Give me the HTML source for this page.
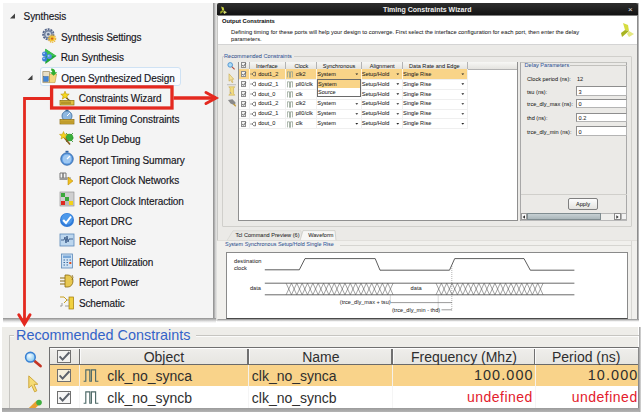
<!DOCTYPE html>
<html><head><meta charset="utf-8"><style>
*{box-sizing:border-box;margin:0;padding:0}
html,body{width:643px;height:412px;overflow:hidden;background:#fff}
body{position:relative;font-family:"Liberation Sans",sans-serif}
.a{position:absolute}
.t{position:absolute;white-space:nowrap;line-height:1}
.ti{font-size:10px;color:#15151c;letter-spacing:-0.1px;-webkit-text-stroke:0.15px #15151c}
.d{font-size:5.6px;color:#1e1e1e;-webkit-text-stroke:0.04px #1e1e1e}
.b{font-size:14px;color:#2e2e2e}
.cb{position:absolute;width:6px;height:6px;border:0.8px solid #8e8e8e;background:#f4f4f4}
.inp{position:absolute;background:#fff;border:1px solid #b4b4b4;border-top-color:#8e8e8e;border-left-color:#8e8e8e}
</style></head><body>
<div class="a" style="left:3px;top:3px;width:211px;height:316px;background:#f4f4f4"></div>
<div class="a" style="left:213px;top:3px;width:4px;height:318px;background:linear-gradient(90deg,#8a8a8a,#b8b8b8 45%,#dcdcdc 70%,#e2e2e0)"></div>
<div class="a" style="left:3px;top:318px;width:213px;height:4.5px;background:linear-gradient(#8e8e8e,#bdbdbd 35%,#e6e6e6 70%,#fff)"></div>
<div class="a" style="left:39.5px;top:66.6px;width:141px;height:19.4px;border:1.4px solid #cfe2f4;border-radius:3px;background:#f9fbfe"></div>
<svg class="a" style="left:0;top:0" width="216" height="320"><path d="M10 18.5 L15 13.5 L15 18.5 Z" fill="#404040"/><path d="M27.5 80 L32.5 75 L32.5 80 Z" fill="#404040"/></svg>
<div class="t ti" style="left:23.6px;top:12.10px">Synthesis</div>
<div class="t ti" style="left:61px;top:32.59px">Synthesis Settings</div>
<div class="t ti" style="left:60.7px;top:53.08px">Run Synthesis</div>
<div class="t ti" style="left:61.3px;top:73.57px">Open Synthesized Design</div>
<div class="t ti" style="left:78.7px;top:94.06px">Constraints Wizard</div>
<div class="t ti" style="left:78.9px;top:114.55px">Edit Timing Constraints</div>
<div class="t ti" style="left:78.9px;top:135.04px">Set Up Debug</div>
<div class="t ti" style="left:78.9px;top:155.53px">Report Timing Summary</div>
<div class="t ti" style="left:78.9px;top:176.02px">Report Clock Networks</div>
<div class="t ti" style="left:78.9px;top:196.51px">Report Clock Interaction</div>
<div class="t ti" style="left:78.6px;top:217.00px">Report DRC</div>
<div class="t ti" style="left:78.9px;top:237.49px">Report Noise</div>
<div class="t ti" style="left:78.9px;top:257.98px">Report Utilization</div>
<div class="t ti" style="left:78.9px;top:278.47px">Report Power</div>
<div class="t ti" style="left:78.9px;top:298.96px">Schematic</div>
<svg class="a" style="left:42px;top:28px" width="16" height="16" viewBox="0 0 16 16"><circle cx="6.3" cy="6.3" r="5.2" fill="none" stroke="#56668a" stroke-width="1.8" stroke-dasharray="2 0.9"/><circle cx="6.3" cy="6.3" r="4.4" fill="#6f7f9c"/><circle cx="6.3" cy="6.3" r="2.9" fill="#c9d3e2"/><circle cx="6.3" cy="6.3" r="1.3" fill="#5b6b88"/><circle cx="10.1" cy="10.6" r="3.6" fill="none" stroke="#e8b030" stroke-width="1.1" stroke-dasharray="1.4 0.7"/><circle cx="10.1" cy="10.6" r="2.8" fill="#f4c430"/><circle cx="10.1" cy="10.6" r="1.2" fill="#d0601a"/></svg>
<svg class="a" style="left:42px;top:48px" width="16" height="16" viewBox="0 0 16 16"><path d="M3.3 0.8 L14.5 8.1 L3.3 15.9 Z" fill="#22a838"/><path d="M3.3 0.8 L14.5 8.1 L3.3 8.1 Z" fill="#3cc050"/><circle cx="2.6" cy="6" r="2.5" fill="#3a7ed6"/><circle cx="2.6" cy="11" r="2.5" fill="#3a7ed6"/><circle cx="7.3" cy="8.5" r="2.5" fill="#4d92e4"/><circle cx="2" cy="5.3" r="0.9" fill="#a8d0ff"/><circle cx="2" cy="10.3" r="0.9" fill="#a8d0ff"/><circle cx="6.7" cy="7.8" r="0.9" fill="#a8d0ff"/></svg>
<svg class="a" style="left:42px;top:67.5px" width="16" height="16" viewBox="0 0 16 16"><path d="M0.8 3.5 H7.5 V14.6 H0.8 Z" fill="#e8e0c8" stroke="#9a8a60" stroke-width="0.7"/><rect x="1.6" y="8.6" width="4.6" height="4.8" fill="#3f86d8" stroke="#2a5a9a" stroke-width="0.5"/><path d="M7.5 6 H14.6 L13 14.6 H7.5 Z" fill="#f4d880" stroke="#b8983a" stroke-width="0.6"/><path d="M9.2 0.6 Q13.2 0.6 13.2 4.2 H15.2 L11.6 7.8 L8 4.2 H10.3 Q10.3 2.4 9.2 2.4 Z" fill="#2fae2f"/></svg>
<svg class="a" style="left:59px;top:89.5px" width="16" height="16" viewBox="0 0 16 16"><path d="M6 1.2 L7.2 4 L10.2 4.2 L7.9 6.1 L8.6 9.1 L6 7.4 L3.4 9.1 L4.1 6.1 L1.8 4.2 L4.8 4 Z" fill="#f6d820" stroke="#b89000" stroke-width="0.6"/><path d="M7.5 8 L13 12.5" stroke="#6a5020" stroke-width="1.1"/><rect x="1" y="10.4" width="14" height="4.6" fill="#e0c040" stroke="#8a7010" stroke-width="0.7"/><path d="M3 11.5 V14 M5 11.5 V14 M7 11.5 V14 M9 11.5 V14 M11 11.5 V14" stroke="#7a6010" stroke-width="0.9"/></svg>
<svg class="a" style="left:59px;top:109px" width="16" height="16" viewBox="0 0 16 16"><circle cx="8" cy="7" r="5" fill="#8fb8e0" stroke="#3a6a9a" stroke-width="0.8"/><path d="M8 7 L11 4" stroke="#fff" stroke-width="1"/><rect x="6.5" y="0.5" width="3" height="1.5" fill="#3a6a9a"/><rect x="1" y="10.5" width="14" height="4.5" fill="#d9b43a" stroke="#8a6a10" stroke-width="0.7"/><path d="M3 11.5 V14 M5 11.5 V14 M7 11.5 V14 M9 11.5 V14 M11 11.5 V14 M13 11.5 V14" stroke="#8a6a10" stroke-width="0.6"/></svg>
<svg class="a" style="left:59px;top:130px" width="16" height="16" viewBox="0 0 16 16"><circle cx="10.5" cy="7.5" r="3.8" fill="#3aae3a"/><path d="M7 3 L9 5 M14 3 L12 5 M6.5 8 H8 M14.5 8 H13 M7 12 L9 10 M14 12 L12 10" stroke="#2a8a2a" stroke-width="0.8"/><path d="M4 6 L11 14.5" stroke="#8a5a20" stroke-width="1.6"/><path d="M4.5 1.5 L5.6 4.2 L8.5 4.4 L6.3 6.2 L7 9 L4.5 7.5 L2 9 L2.7 6.2 L0.5 4.4 L3.4 4.2 Z" fill="#f2d21a" stroke="#b89000" stroke-width="0.5"/></svg>
<svg class="a" style="left:59px;top:150px" width="16" height="16" viewBox="0 0 16 16"><circle cx="8" cy="9" r="6.2" fill="#5d9ae0" stroke="#2f65a8" stroke-width="0.9"/><circle cx="8" cy="9" r="4.5" fill="#9ec8f2"/><path d="M8 9 L11 6" stroke="#fff" stroke-width="1.2"/><rect x="6.5" y="0.8" width="3" height="1.6" fill="#2f65a8"/></svg>
<svg class="a" style="left:59px;top:170px" width="16" height="16" viewBox="0 0 16 16"><path d="M1 8 V3 H4 V8 M4 8 V3 H7 V8" fill="none" stroke="#777" stroke-width="1"/><path d="M1 8 H12" stroke="#777" stroke-width="0.8"/><path d="M9 7 L14 11 L9 15 Z" fill="#f0c020" stroke="#b08000" stroke-width="0.5"/><rect x="0.5" y="8" width="8" height="2" fill="#999"/></svg>
<svg class="a" style="left:59px;top:191px" width="16" height="16" viewBox="0 0 16 16"><rect x="1" y="1" width="14" height="14" fill="#cfcfcf" stroke="#888" stroke-width="0.6"/><rect x="2" y="2" width="4" height="4" fill="#3aa83a"/><rect x="6" y="6" width="4" height="4" fill="#3aa83a"/><rect x="2" y="10" width="4" height="4" fill="#e02a20"/><rect x="10" y="10" width="4" height="4" fill="#f2d21a"/><rect x="6" y="10" width="4" height="4" fill="#bbb"/></svg>
<svg class="a" style="left:59px;top:212px" width="16" height="16" viewBox="0 0 16 16"><circle cx="8" cy="8" r="7" fill="#2f7ad8"/><circle cx="8" cy="7" r="5.6" fill="#4c98ea"/><path d="M4.2 8 L7 11 L12 4.5" fill="none" stroke="#fff" stroke-width="2"/></svg>
<svg class="a" style="left:59px;top:232px" width="16" height="16" viewBox="0 0 16 16"><rect x="1" y="2" width="14" height="12" fill="#bcd6ee" stroke="#5a88b8" stroke-width="0.8"/><path d="M2 8 H5 L6 5 L7 11 L8 4 L9 10 L10 7 H14" fill="none" stroke="#2a4a7a" stroke-width="0.8"/></svg>
<svg class="a" style="left:59px;top:253px" width="16" height="16" viewBox="0 0 16 16"><rect x="2.5" y="1" width="11" height="14" fill="#cfe2f4" stroke="#5a88b8" stroke-width="0.8"/><rect x="4" y="2.5" width="8" height="2.5" fill="#7aa8d8"/><path d="M4.5 7 H6 M7.5 7 H9 M10.5 7 H12 M4.5 9.5 H6 M7.5 9.5 H9 M4.5 12 H6 M7.5 12 H9" stroke="#3a6aa0" stroke-width="1"/><rect x="10.3" y="9" width="2" height="2" fill="#e05020"/></svg>
<svg class="a" style="left:59px;top:273px" width="16" height="16" viewBox="0 0 16 16"><path d="M6 2 H9 A5 6 0 0 1 9 14 H6 Z" fill="#e8c850" stroke="#8a6a10" stroke-width="0.8"/><path d="M1 5 H6 M1 8 H6 M1 11 H6" stroke="#8a6a10" stroke-width="1.2"/><path d="M13 2 Q15 4 13 7" fill="none" stroke="#8a6a10" stroke-width="0.8"/></svg>
<svg class="a" style="left:59px;top:294px" width="16" height="16" viewBox="0 0 16 16"><path d="M1 3 H5 L8 6 L5 9" fill="none" stroke="#c9a020" stroke-width="1"/><path d="M1 12 H3 V9" fill="none" stroke="#888" stroke-width="0.8"/><rect x="10" y="3" width="4.5" height="12" fill="#f0d040" stroke="#a07800" stroke-width="0.7"/><path d="M8 6 H10 M6 12 H10" stroke="#888" stroke-width="0.8"/></svg>
<div class="a" style="left:217px;top:3px;width:421px;height:317px;background:#ebeae7"></div>
<div class="a" style="left:637px;top:3px;width:2px;height:318px;background:linear-gradient(90deg,#777,#ccc)"></div>
<div class="a" style="left:217px;top:318.8px;width:422px;height:3.5px;background:linear-gradient(#8a8a8a,#c4c4c4 40%,#eee 75%,#fff)"></div>
<div class="a" style="left:217px;top:3px;width:421px;height:12.3px;background:linear-gradient(#2e2e2e,#131313);border-radius:2px 2px 0 0"></div>
<svg class="a" style="left:219px;top:5.5px" width="9" height="9" viewBox="0 0 15 17"><path d="M3 1 L8 3 L9 9 L5 8 Z" fill="#c8d040"/><path d="M5 8 L9 9 L2 15 L1 11 Z" fill="#98a420"/><path d="M9 9 L14 12 L9 15 L7 12 Z" fill="#d4dc70"/></svg>
<div class="a" style="left:217px;top:15.3px;width:421px;height:0.8px;background:#7d7d7d"></div>
<div class="t" style="left:383px;top:5.8px;font-size:7px;font-weight:bold;color:#efefef">Timing Constraints Wizard</div>
<div class="t" style="left:628px;top:6px;font-size:8px;color:#e0e0e0">×</div>
<div class="a" style="left:217.8px;top:16px;width:419.2px;height:29px;background:#fff;border-bottom:0.8px solid #d4d4d4"></div>
<div class="a" style="left:216.8px;top:15px;width:1px;height:305px;background:#c8c8c6"></div>
<div class="t d" style="left:222px;top:19.3px;font-weight:bold;font-size:5.8px;color:#111">Output Constraints</div>
<div class="t d" style="left:231px;top:29.5px;font-size:5.75px">Defining timing for these ports will help your design to converge. First select the interface configuration for each port, then enter the delay</div>
<div class="t d" style="left:231px;top:37px;font-size:5.75px">parameters.</div>
<svg class="a" style="left:620px;top:22px" width="15" height="17" viewBox="0 0 15 17"><path d="M3 1 L8 3 L9 9 L5 8 Z" fill="#d6dc40"/><path d="M5 8 L9 9 L2 15 L1 11 Z" fill="#a8b420"/><path d="M9 9 L14 12 L9 15 L7 12 Z" fill="#e4e880"/></svg>
<div class="a" style="left:222.3px;top:55.5px;width:409.3px;height:171px;border:0.9px solid #d0cfcb;border-radius:1px"></div>
<div class="t d" style="left:224px;top:53.8px;color:#3760a8;background:#ebeae7;padding-right:2px">Recommended Constraints</div>
<svg class="a" style="left:226px;top:61px" width="11" height="48" viewBox="0 0 11 48"><path d="M5.8 5.6 L8.6 8.3" stroke="#b04838" stroke-width="1.1"/><circle cx="4.2" cy="3.9" r="2.3" fill="#aedcf4" stroke="#4a90d0" stroke-width="0.9"/><path d="M3 12.8 L3 20.2 L4.6 18.8 L6 21.6 L7 21.2 L5.8 18.3 L7.8 18.2 Z" fill="#f3e2a0" stroke="#c8a848" stroke-width="0.6" stroke-linejoin="round"/><path d="M1 23.7 H10" stroke="#a8a8a8" stroke-width="0.7"/><path d="M2.8 25.8 H8.8 L7.6 27.4 V32.6 L8.8 34.2 H2.8 L4 32.6 V27.4 Z" fill="#f2dc80" stroke="#c0a040" stroke-width="0.5"/><path d="M4.3 31 L5.2 33" stroke="#8080c0" stroke-width="0.6"/><path d="M2 39 L6.5 38.3 L9.5 41.5 L9 44.5 L4.5 42.5 Z" fill="#8a8a8a"/><path d="M7.5 43 L9.8 45.3" stroke="#c8a040" stroke-width="1.3"/></svg>
<div class="a" style="left:237.5px;top:61.5px;width:280.0px;height:159.5px;background:#fff;border:1px solid #8f8f8f"></div>
<div class="a" style="left:238.5px;top:62.0px;width:278.0px;height:7.5px;background:linear-gradient(#f7f7f5,#e4e3df);border-bottom:1px solid #b3b3b3"></div>
<div class="a" style="left:249px;top:62px;width:1px;height:7px;background:#b3b3b3"></div>
<div class="a" style="left:284.5px;top:62px;width:1px;height:7px;background:#b3b3b3"></div>
<div class="a" style="left:315.8px;top:62px;width:1px;height:7px;background:#b3b3b3"></div>
<div class="a" style="left:361.1px;top:62px;width:1px;height:7px;background:#b3b3b3"></div>
<div class="a" style="left:402.2px;top:62px;width:1px;height:7px;background:#b3b3b3"></div>
<div class="a" style="left:467.2px;top:62px;width:1px;height:7px;background:#b3b3b3"></div>
<div class="a" style="left:238.5px;top:69.2px;width:228.7px;height:9.35px;background:#f9d488"></div>
<div class="a" style="left:238.5px;top:78.65px;width:228.7px;height:1px;background:#efefef"></div>
<div class="a" style="left:238.5px;top:88.60px;width:228.7px;height:1px;background:#efefef"></div>
<div class="a" style="left:238.5px;top:98.55px;width:228.7px;height:1px;background:#efefef"></div>
<div class="a" style="left:238.5px;top:108.50px;width:228.7px;height:1px;background:#efefef"></div>
<div class="a" style="left:238.5px;top:118.45px;width:228.7px;height:1px;background:#efefef"></div>
<div class="a" style="left:238.5px;top:128.40px;width:228.7px;height:1px;background:#efefef"></div>
<div class="a" style="left:249px;top:69.2px;width:1px;height:59.7px;background:#f0f0f0"></div>
<div class="a" style="left:284.5px;top:69.2px;width:1px;height:59.7px;background:#f0f0f0"></div>
<div class="a" style="left:315.8px;top:69.2px;width:1px;height:59.7px;background:#f0f0f0"></div>
<div class="a" style="left:361.1px;top:69.2px;width:1px;height:59.7px;background:#f0f0f0"></div>
<div class="a" style="left:402.2px;top:69.2px;width:1px;height:59.7px;background:#f0f0f0"></div>
<div class="a" style="left:467.2px;top:69.2px;width:1px;height:59.7px;background:#f0f0f0"></div>
<div class="t d" style="left:255.9px;top:64px">Interface</div>
<div class="t d" style="left:294.4px;top:64px">Clock</div>
<div class="t d" style="left:322.7px;top:64px">Synchronous</div>
<div class="t d" style="left:369.8px;top:64px">Alignment</div>
<div class="t d" style="left:409px;top:64px">Data Rate and Edge</div>
<div class="cb" style="left:240.5px;top:62.4px;width:5.6px;height:5.6px"></div>
<svg class="a" style="left:240.5px;top:62.4px" width="6" height="6" viewBox="0 0 6 6"><path d="M1.2 2.9 L2.5 4.3 L4.9 1.3" fill="none" stroke="#505050" stroke-width="0.9"/></svg>
<div class="cb" style="left:240.5px;top:71.20px;width:5.6px;height:5.6px"></div>
<svg class="a" style="left:240.5px;top:71.20px" width="6" height="6" viewBox="0 0 6 6"><path d="M1.2 2.9 L2.5 4.3 L4.9 1.3" fill="none" stroke="#505050" stroke-width="0.9"/></svg>
<svg class="a" style="left:250px;top:71.20px" width="6" height="6" viewBox="0 0 6 6"><path d="M0.3 3 H1.8 M2 3 L3.8 1.2 H5.5 V4.8 H3.8 Z" fill="none" stroke="#505050" stroke-width="0.7"/></svg>
<div class="t d" style="left:258.2px;top:71.60px">dout1_2</div>
<svg class="a" style="left:286.8px;top:71.00px" width="6" height="7" viewBox="0 0 6 7"><path d="M0.4 6.4 V0.8 H2.5 V6.4 H3.5 V0.8 H5.6 V6.4" fill="none" stroke="#90a090" stroke-width="0.8"/></svg>
<div class="t d" style="left:295.7px;top:71.60px">clk2</div>
<div class="t d" style="left:317.3px;top:71.60px">System</div>
<div class="t d" style="left:361.7px;top:71.60px">Setup/Hold</div>
<div class="t d" style="left:403px;top:71.60px">Single Rise</div>
<div class="cb" style="left:240.5px;top:81.15px;width:5.6px;height:5.6px"></div>
<svg class="a" style="left:240.5px;top:81.15px" width="6" height="6" viewBox="0 0 6 6"><path d="M1.2 2.9 L2.5 4.3 L4.9 1.3" fill="none" stroke="#505050" stroke-width="0.9"/></svg>
<svg class="a" style="left:250px;top:81.15px" width="6" height="6" viewBox="0 0 6 6"><path d="M0.3 3 H1.8 M2 3 L3.8 1.2 H5.5 V4.8 H3.8 Z" fill="none" stroke="#505050" stroke-width="0.7"/></svg>
<div class="t d" style="left:258.2px;top:81.55px">dout2_1</div>
<svg class="a" style="left:286.8px;top:80.95px" width="6" height="7" viewBox="0 0 6 7"><path d="M0.4 6.4 V0.8 H2.5 V6.4 H3.5 V0.8 H5.6 V6.4" fill="none" stroke="#90a090" stroke-width="0.8"/></svg>
<div class="t d" style="left:295.7px;top:81.55px">pll0/clk</div>
<div class="t d" style="left:361.7px;top:81.55px">Setup/Hold</div>
<div class="t d" style="left:403px;top:81.55px">Single Rise</div>
<div class="cb" style="left:240.5px;top:91.10px;width:5.6px;height:5.6px"></div>
<svg class="a" style="left:240.5px;top:91.10px" width="6" height="6" viewBox="0 0 6 6"><path d="M1.2 2.9 L2.5 4.3 L4.9 1.3" fill="none" stroke="#505050" stroke-width="0.9"/></svg>
<svg class="a" style="left:250px;top:91.10px" width="6" height="6" viewBox="0 0 6 6"><path d="M0.3 3 H1.8 M2 3 L3.8 1.2 H5.5 V4.8 H3.8 Z" fill="none" stroke="#505050" stroke-width="0.7"/></svg>
<div class="t d" style="left:258.2px;top:91.50px">dout_0</div>
<svg class="a" style="left:286.8px;top:90.90px" width="6" height="7" viewBox="0 0 6 7"><path d="M0.4 6.4 V0.8 H2.5 V6.4 H3.5 V0.8 H5.6 V6.4" fill="none" stroke="#90a090" stroke-width="0.8"/></svg>
<div class="t d" style="left:295.7px;top:91.50px">clk</div>
<div class="t d" style="left:361.7px;top:91.50px">Setup/Hold</div>
<div class="t d" style="left:403px;top:91.50px">Single Rise</div>
<div class="cb" style="left:240.5px;top:101.05px;width:5.6px;height:5.6px"></div>
<svg class="a" style="left:240.5px;top:101.05px" width="6" height="6" viewBox="0 0 6 6"><path d="M1.2 2.9 L2.5 4.3 L4.9 1.3" fill="none" stroke="#505050" stroke-width="0.9"/></svg>
<svg class="a" style="left:250px;top:101.05px" width="6" height="6" viewBox="0 0 6 6"><path d="M0.3 3 H1.8 M2 3 L3.8 1.2 H5.5 V4.8 H3.8 Z" fill="none" stroke="#505050" stroke-width="0.7"/></svg>
<div class="t d" style="left:258.2px;top:101.45px">dout1_2</div>
<svg class="a" style="left:286.8px;top:100.85px" width="6" height="7" viewBox="0 0 6 7"><path d="M0.4 6.4 V0.8 H2.5 V6.4 H3.5 V0.8 H5.6 V6.4" fill="none" stroke="#90a090" stroke-width="0.8"/></svg>
<div class="t d" style="left:295.7px;top:101.45px">clk2</div>
<div class="t d" style="left:317.3px;top:101.45px">System</div>
<div class="t d" style="left:361.7px;top:101.45px">Setup/Hold</div>
<div class="t d" style="left:403px;top:101.45px">Single Rise</div>
<div class="cb" style="left:240.5px;top:111.00px;width:5.6px;height:5.6px"></div>
<svg class="a" style="left:240.5px;top:111.00px" width="6" height="6" viewBox="0 0 6 6"><path d="M1.2 2.9 L2.5 4.3 L4.9 1.3" fill="none" stroke="#505050" stroke-width="0.9"/></svg>
<svg class="a" style="left:250px;top:111.00px" width="6" height="6" viewBox="0 0 6 6"><path d="M0.3 3 H1.8 M2 3 L3.8 1.2 H5.5 V4.8 H3.8 Z" fill="none" stroke="#505050" stroke-width="0.7"/></svg>
<div class="t d" style="left:258.2px;top:111.40px">dout2_1</div>
<svg class="a" style="left:286.8px;top:110.80px" width="6" height="7" viewBox="0 0 6 7"><path d="M0.4 6.4 V0.8 H2.5 V6.4 H3.5 V0.8 H5.6 V6.4" fill="none" stroke="#90a090" stroke-width="0.8"/></svg>
<div class="t d" style="left:295.7px;top:111.40px">pll0/clk</div>
<div class="t d" style="left:317.3px;top:111.40px">System</div>
<div class="t d" style="left:361.7px;top:111.40px">Setup/Hold</div>
<div class="t d" style="left:403px;top:111.40px">Single Rise</div>
<div class="cb" style="left:240.5px;top:120.95px;width:5.6px;height:5.6px"></div>
<svg class="a" style="left:240.5px;top:120.95px" width="6" height="6" viewBox="0 0 6 6"><path d="M1.2 2.9 L2.5 4.3 L4.9 1.3" fill="none" stroke="#505050" stroke-width="0.9"/></svg>
<svg class="a" style="left:250px;top:120.95px" width="6" height="6" viewBox="0 0 6 6"><path d="M0.3 3 H1.8 M2 3 L3.8 1.2 H5.5 V4.8 H3.8 Z" fill="none" stroke="#505050" stroke-width="0.7"/></svg>
<div class="t d" style="left:258.2px;top:121.35px">dout_0</div>
<svg class="a" style="left:286.8px;top:120.75px" width="6" height="7" viewBox="0 0 6 7"><path d="M0.4 6.4 V0.8 H2.5 V6.4 H3.5 V0.8 H5.6 V6.4" fill="none" stroke="#90a090" stroke-width="0.8"/></svg>
<div class="t d" style="left:295.7px;top:121.35px">clk</div>
<div class="t d" style="left:317.3px;top:121.35px">System</div>
<div class="t d" style="left:361.7px;top:121.35px">Setup/Hold</div>
<div class="t d" style="left:403px;top:121.35px">Single Rise</div>
<svg class="a" style="left:0;top:0" width="643" height="140"><path d="M355.40 73.38 H358.20 L356.80 74.98 Z" fill="#222"/><path d="M396.40 73.38 H399.20 L397.80 74.98 Z" fill="#222"/><path d="M461.40 73.38 H464.20 L462.80 74.98 Z" fill="#222"/><path d="M396.40 83.33 H399.20 L397.80 84.93 Z" fill="#222"/><path d="M461.40 83.33 H464.20 L462.80 84.93 Z" fill="#222"/><path d="M396.40 93.27 H399.20 L397.80 94.88 Z" fill="#222"/><path d="M461.40 93.27 H464.20 L462.80 94.88 Z" fill="#222"/><path d="M355.40 103.22 H358.20 L356.80 104.83 Z" fill="#222"/><path d="M396.40 103.22 H399.20 L397.80 104.83 Z" fill="#222"/><path d="M461.40 103.22 H464.20 L462.80 104.83 Z" fill="#222"/><path d="M355.40 113.17 H358.20 L356.80 114.78 Z" fill="#222"/><path d="M396.40 113.17 H399.20 L397.80 114.78 Z" fill="#222"/><path d="M461.40 113.17 H464.20 L462.80 114.78 Z" fill="#222"/><path d="M355.40 123.12 H358.20 L356.80 124.73 Z" fill="#222"/><path d="M396.40 123.12 H399.20 L397.80 124.73 Z" fill="#222"/><path d="M461.40 123.12 H464.20 L462.80 124.73 Z" fill="#222"/></svg>
<div class="a" style="left:249px;top:69.2px;width:0.8px;height:9.35px;background:#fff6e0"></div>
<div class="a" style="left:284.5px;top:69.2px;width:0.8px;height:9.35px;background:#fff6e0"></div>
<div class="a" style="left:315.8px;top:69.2px;width:0.8px;height:9.35px;background:#fff6e0"></div>
<div class="a" style="left:361.1px;top:69.2px;width:0.8px;height:9.35px;background:#fff6e0"></div>
<div class="a" style="left:402.2px;top:69.2px;width:0.8px;height:9.35px;background:#fff6e0"></div>
<div class="a" style="left:316.5px;top:79px;width:44px;height:17.8px;background:#fff;border:1px solid #6a6a6a"></div>
<div class="a" style="left:317.5px;top:80px;width:42px;height:8px;background:#f9d488"></div>
<div class="t d" style="left:318px;top:81.5px">System</div>
<div class="t d" style="left:318px;top:89.8px">Source</div>
<div class="a" style="left:520.1px;top:61.5px;width:107.3px;height:159.5px;border:1px solid #a8a8a8;border-top-color:#c4c4c0"></div>
<div class="a" style="left:569px;top:65.3px;width:57.5px;height:1px;background:#c2c1bd"></div>
<div class="t d" style="left:523.5px;top:63.3px;color:#3760a8;background:#ebeae7;padding:0 1px">Delay Parameters</div>
<div class="t d" style="left:527px;top:76.50px">Clock period (ns):</div>
<div class="t d" style="left:577px;top:76.50px">12</div>
<div class="t d" style="left:527px;top:89.50px">tsu (ns):</div>
<div class="inp" style="left:576.4px;top:86.40px;width:51px;height:9.3px"></div>
<div class="t d" style="left:578.5px;top:89.50px">3</div>
<div class="t d" style="left:527px;top:102.30px">trce_dly_max (ns):</div>
<div class="inp" style="left:576.4px;top:99.20px;width:51px;height:9.3px"></div>
<div class="t d" style="left:578.5px;top:102.30px">0</div>
<div class="t d" style="left:527px;top:115.70px">thd (ns):</div>
<div class="inp" style="left:576.4px;top:112.60px;width:51px;height:9.3px"></div>
<div class="t d" style="left:578.5px;top:115.70px">0.2</div>
<div class="t d" style="left:527px;top:129.50px">trce_dly_min (ns):</div>
<div class="inp" style="left:576.4px;top:126.40px;width:51px;height:9.3px"></div>
<div class="t d" style="left:578.5px;top:129.50px">0</div>
<div class="a" style="left:521px;top:193.5px;width:106px;height:1px;background:#d0cfcb"></div>
<div class="a" style="left:568px;top:198px;width:29.6px;height:12.2px;border:1px solid #7f7f7f;border-radius:2px;background:linear-gradient(#fdfdfd,#e4e3df)"></div>
<div class="t d" style="left:576px;top:201.8px">Apply</div>
<div class="a" style="left:520.6px;top:213px;width:106.4px;height:7.8px;background:#efefed;border:0.8px solid #b8b8b8"></div>
<div class="a" style="left:521px;top:213.4px;width:6px;height:7px;background:#f8f8f8;border:0.7px solid #9a9a9a"></div>
<div class="a" style="left:527px;top:213.4px;width:73.5px;height:7px;background:linear-gradient(#c6d0d3,#aab6ba);border:0.8px solid #7f8c90"></div>
<div class="a" style="left:614px;top:213.4px;width:7px;height:7px;border:0.7px solid #8a8a8a;background:#f8f8f8"></div>
<div class="a" style="left:621px;top:213.4px;width:5.8px;height:7px;border:0.7px solid #b0b0b0;background:#f2f2f2"></div>
<svg class="a" style="left:520px;top:212px" width="108" height="10"><path d="M2.6 5 L5 3.3 V6.7 Z" fill="#333"/><path d="M96.3 3.3 L98.7 5 L96.3 6.7 Z" fill="#333"/></svg>
<svg class="a" style="left:217px;top:228px" width="420" height="14"><path d="M10 12.5 L16 2.8 H84 L85 12.5 Z" fill="#e9e8e4" stroke="#d2d1cc" stroke-width="0.6"/><path d="M83 12.5 L86 2.6 H118 L119 12.5" fill="#f7f7f5" stroke="#c6c5c0" stroke-width="0.7"/><path d="M0 12.6 H420" stroke="#dcdbd6" stroke-width="0.8"/></svg>
<div class="t d" style="left:235.5px;top:232.8px;font-size:5.6px">Tcl Command Preview (6)</div>
<div class="t d" style="left:308.2px;top:232.8px;font-size:5.6px">Waveform</div>
<div class="a" style="left:217px;top:241px;width:420px;height:78px;background:#f1f0ed"></div>
<div class="a" style="left:630.5px;top:241px;width:0.8px;height:78px;background:#d8d7d3"></div>
<div class="t d" style="left:225px;top:242.4px;color:#3760a8;font-size:5.45px">System Synchronous Setup/Hold Single Rise</div>
<div class="a" style="left:339.5px;top:244.8px;width:292px;height:0.8px;background:#d6d5d1"></div>
<div class="a" style="left:226px;top:252.3px;width:402px;height:66.5px;background:#fff;border:1px solid #8a8a8a;border-bottom:1.6px solid #4a4a4a"></div>
<svg class="a" style="left:0;top:0" width="643" height="320"><path d="M264.8 269.8 H299.3 L305 258.6 H375.2 L380 270.2 H449.5 L454.7 258.6 H524 L530.3 270.2 H574.4" fill="none" stroke="#333" stroke-width="0.8"/><path d="M264.8 283.2 H574.4 M264.8 294.8 H574.4" fill="none" stroke="#444" stroke-width="0.8"/><path d="M286.10 283.2 L291.45 294.8 M286.10 294.8 L291.45 283.2 M291.45 283.2 L296.80 294.8 M291.45 294.8 L296.80 283.2 M296.80 283.2 L302.15 294.8 M296.80 294.8 L302.15 283.2 M302.15 283.2 L307.50 294.8 M302.15 294.8 L307.50 283.2 M307.50 283.2 L312.85 294.8 M307.50 294.8 L312.85 283.2 M312.85 283.2 L318.20 294.8 M312.85 294.8 L318.20 283.2 M318.20 283.2 L323.55 294.8 M318.20 294.8 L323.55 283.2 M323.55 283.2 L328.90 294.8 M323.55 294.8 L328.90 283.2 M328.90 283.2 L334.25 294.8 M328.90 294.8 L334.25 283.2 M334.25 283.2 L339.60 294.8 M334.25 294.8 L339.60 283.2 M339.60 283.2 L344.95 294.8 M339.60 294.8 L344.95 283.2 M344.95 283.2 L350.30 294.8 M344.95 294.8 L350.30 283.2 M350.30 283.2 L355.65 294.8 M350.30 294.8 L355.65 283.2 M355.65 283.2 L361.00 294.8 M355.65 294.8 L361.00 283.2 M361.00 283.2 L366.35 294.8 M361.00 294.8 L366.35 283.2 M366.35 283.2 L371.70 294.8 M366.35 294.8 L371.70 283.2 M371.70 283.2 L377.05 294.8 M371.70 294.8 L377.05 283.2 M377.05 283.2 L382.40 294.8 M377.05 294.8 L382.40 283.2 M382.40 283.2 L387.75 294.8 M382.40 294.8 L387.75 283.2 M387.75 283.2 L393.10 294.8 M387.75 294.8 L393.10 283.2 " stroke="#555" stroke-width="0.55" fill="none"/><path d="M436.00 283.2 L441.36 294.8 M436.00 294.8 L441.36 283.2 M441.36 283.2 L446.71 294.8 M441.36 294.8 L446.71 283.2 M446.71 283.2 L452.06 294.8 M446.71 294.8 L452.06 283.2 M452.06 283.2 L457.42 294.8 M452.06 294.8 L457.42 283.2 M457.42 283.2 L462.78 294.8 M457.42 294.8 L462.78 283.2 M462.77 283.2 L468.13 294.8 M462.77 294.8 L468.13 283.2 M468.13 283.2 L473.49 294.8 M468.13 294.8 L473.49 283.2 M473.49 283.2 L478.84 294.8 M473.49 294.8 L478.84 283.2 M478.84 283.2 L484.20 294.8 M478.84 294.8 L484.20 283.2 M484.19 283.2 L489.55 294.8 M484.19 294.8 L489.55 283.2 M489.55 283.2 L494.91 294.8 M489.55 294.8 L494.91 283.2 M494.91 283.2 L500.26 294.8 M494.91 294.8 L500.26 283.2 M500.26 283.2 L505.62 294.8 M500.26 294.8 L505.62 283.2 M505.62 283.2 L510.97 294.8 M505.62 294.8 L510.97 283.2 M510.97 283.2 L516.33 294.8 M510.97 294.8 L516.33 283.2 M516.33 283.2 L521.68 294.8 M516.33 294.8 L521.68 283.2 M521.68 283.2 L527.04 294.8 M521.68 294.8 L527.04 283.2 M527.04 283.2 L532.39 294.8 M527.04 294.8 L532.39 283.2 M532.39 283.2 L537.75 294.8 M532.39 294.8 L537.75 283.2 M537.75 283.2 L543.10 294.8 M537.75 294.8 L543.10 283.2 " stroke="#555" stroke-width="0.55" fill="none"/><path d="M391 302.6 H452 M441.5 309.8 H452" stroke="#555" stroke-width="0.6"/><path d="M390.3 295.5 V303 M438.2 295.5 V310.5 M451.8 266 V310.5" stroke="#666" stroke-width="0.5" stroke-dasharray="1 1"/></svg>
<div class="t d" style="left:234px;top:258.7px;font-size:5.7px;color:#333">destination</div>
<div class="t d" style="left:234px;top:265.8px;font-size:5.7px;color:#333">clock</div>
<div class="t d" style="left:249.9px;top:286.1px;font-size:5.7px;color:#333">data</div>
<div class="t d" style="left:410.6px;top:286.3px;font-size:5.7px;color:#333">data</div>
<div class="t d" style="left:339.8px;top:300.4px;font-size:5.6px;color:#333">(trce_dly_max + tsu)</div>
<div class="t d" style="left:392px;top:307.6px;font-size:5.6px;color:#333">(trce_dly_min - thd)</div>
<div class="a" style="left:2px;top:327px;width:636px;height:85px;background:#eeede9"></div>
<div class="a" style="left:10px;top:336.2px;width:628px;height:1px;background:#fbfbfa"></div>
<div class="a" style="left:9px;top:335px;width:629.5px;height:80px;border:1px solid #c6c5c1;border-right:none;border-radius:1px 0 0 0"></div>
<div class="t b" style="left:14px;top:328px;font-size:14.4px;color:#3463c8;background:#eeede9;padding:0 6px 0 2px">Recommended Constraints</div>
<div class="a" style="left:48.5px;top:347.2px;width:590px;height:70px;background:#fff;border:1.3px solid #707070;border-right:1px solid #8a8a8a"></div>
<div class="a" style="left:49.8px;top:348.5px;width:587.8px;height:16.6px;background:linear-gradient(#efeeeb,#e6e5e1);border-bottom:1.4px solid #6a6a6a"></div>
<div class="a" style="left:78.60000000000001px;top:348.5px;width:1.4px;height:15.5px;background:#707070"></div>
<div class="a" style="left:80.0px;top:348.5px;width:1px;height:15.5px;background:#fafafa"></div>
<div class="a" style="left:247.2px;top:348.5px;width:1.4px;height:15.5px;background:#707070"></div>
<div class="a" style="left:248.6px;top:348.5px;width:1px;height:15.5px;background:#fafafa"></div>
<div class="a" style="left:391.4px;top:348.5px;width:1.4px;height:15.5px;background:#707070"></div>
<div class="a" style="left:392.8px;top:348.5px;width:1px;height:15.5px;background:#fafafa"></div>
<div class="a" style="left:533.9000000000001px;top:348.5px;width:1.4px;height:15.5px;background:#707070"></div>
<div class="a" style="left:535.3000000000001px;top:348.5px;width:1px;height:15.5px;background:#fafafa"></div>
<div class="a" style="left:49.8px;top:365.1px;width:587.8px;height:21.4px;background:#f9d38a"></div>
<div class="a" style="left:638.5px;top:327px;width:2.5px;height:85px;background:linear-gradient(90deg,#9a9a9a,#dcdcdc)"></div>
<div class="a" style="left:79.4px;top:365px;width:1px;height:43px;background:#f4f4f4;opacity:.9"></div>
<div class="a" style="left:248px;top:365px;width:1px;height:43px;background:#f4f4f4;opacity:.9"></div>
<div class="a" style="left:392.2px;top:365px;width:1px;height:43px;background:#f4f4f4;opacity:.9"></div>
<div class="a" style="left:534.7px;top:365px;width:1px;height:43px;background:#f4f4f4;opacity:.9"></div>
<div class="t b" style="left:143.7px;top:349.6px">Object</div>
<div class="t b" style="left:302.2px;top:349.6px">Name</div>
<div class="t b" style="left:411px;top:349.6px">Frequency (Mhz)</div>
<div class="t b" style="left:552px;top:349.6px">Period (ns)</div>
<div class="a" style="left:57.3px;top:349.6px;width:13.5px;height:13.2px;border:1.4px solid #707070;background:#f2f2f0"></div>
<svg class="a" style="left:57.3px;top:349.6px" width="14" height="14" viewBox="0 0 14 14"><path d="M2.6 6.4 L5.6 9.6 L12.4 2.2" fill="none" stroke="#5c626b" stroke-width="2"/></svg>
<div class="a" style="left:57.3px;top:368.8px;width:13.5px;height:13.2px;border:1.4px solid #707070;background:#f6f0dc"></div>
<svg class="a" style="left:57.3px;top:368.8px" width="14" height="14" viewBox="0 0 14 14"><path d="M2.6 6.4 L5.6 9.6 L12.4 2.2" fill="none" stroke="#5c626b" stroke-width="2"/></svg>
<div class="a" style="left:57.3px;top:391.3px;width:13.5px;height:13.2px;border:1.4px solid #707070;background:#f6f6f6"></div>
<svg class="a" style="left:57.3px;top:391.3px" width="14" height="14" viewBox="0 0 14 14"><path d="M2.6 6.4 L5.6 9.6 L12.4 2.2" fill="none" stroke="#5c626b" stroke-width="2"/></svg>
<svg class="a" style="left:83px;top:369px" width="16" height="13" viewBox="0 0 16 13"><path d="M0.6 12.2 H2.8 V0.8 H6.8 V12.2 H8.4 V0.8 H12.6 V12.2 H15.4" fill="none" stroke="#4e6a68" stroke-width="1.15"/></svg>
<div class="t b" style="left:107.3px;top:368.7px">clk_no_synca</div>
<div class="t b" style="left:251.8px;top:368.7px">clk_no_synca</div>
<svg class="a" style="left:83px;top:391.3px" width="16" height="13" viewBox="0 0 16 13"><path d="M0.6 12.2 H2.8 V0.8 H6.8 V12.2 H8.4 V0.8 H12.6 V12.2 H15.4" fill="none" stroke="#4e6a68" stroke-width="1.15"/></svg>
<div class="t b" style="left:107.3px;top:391.0px">clk_no_syncb</div>
<div class="t b" style="left:251.8px;top:391.0px">clk_no_syncb</div>
<div class="t b" style="left:433.6px;width:100px;text-align:right;top:368.3px;letter-spacing:1.1px;font-size:14.4px">100.000</div>
<div class="t b" style="left:538.4px;width:100px;text-align:right;top:368.3px;letter-spacing:1.1px;font-size:14.4px">10.000</div>
<div class="t b" style="left:432.9px;width:100px;text-align:right;top:390.4px;color:#e3202c;letter-spacing:0.5px">undefined</div>
<div class="t b" style="left:537.7px;width:100px;text-align:right;top:390.4px;color:#e3202c;letter-spacing:0.5px">undefined</div>
<svg class="a" style="left:15px;top:345px" width="35" height="67" viewBox="0 0 35 67"><defs><radialGradient id="lens" cx="0.4" cy="0.35" r="0.7"><stop offset="0" stop-color="#f4fbff"/><stop offset="1" stop-color="#7cc4ee"/></radialGradient></defs><path d="M19.5 16 L25.5 21" stroke="#c43424" stroke-width="2.8" stroke-linecap="round"/><circle cx="15.4" cy="12.2" r="4.8" fill="url(#lens)" stroke="#3a82d4" stroke-width="1.6"/><path d="M13.8 30.9 L13.8 43 L16.6 40.3 L19.6 46.8 L21.8 45.8 L19 39.4 L22.8 39.2 Z" fill="#f6dc74" stroke="#c9a032" stroke-width="0.9" stroke-linejoin="round"/><path d="M13 67 L23 57.5" stroke="#e8a030" stroke-width="4.5"/><circle cx="24" cy="57.6" r="2.8" fill="#3fae3f"/></svg>
<div class="a" style="left:2px;top:408.4px;width:637px;height:3.6px;background:linear-gradient(#9a9a9a,#b4b4b4)"></div>
<svg class="a" style="left:0;top:0" width="643" height="412"><rect x="51.6" y="86.9" width="120.4" height="21.1" fill="none" stroke="#e4291f" stroke-width="3.3"/><path d="M50 98.5 H24.5 V324" fill="none" stroke="#e4291f" stroke-width="2.8"/><path d="M18.8 314.8 L24.4 324 L30 314.8" fill="none" stroke="#e4291f" stroke-width="3" stroke-linecap="round"/><path d="M173.6 98 H216" fill="none" stroke="#e4291f" stroke-width="3.3"/><path d="M206 92.5 L216 98 L206 103.5" fill="none" stroke="#e4291f" stroke-width="3" stroke-linecap="round"/></svg>
</body></html>
